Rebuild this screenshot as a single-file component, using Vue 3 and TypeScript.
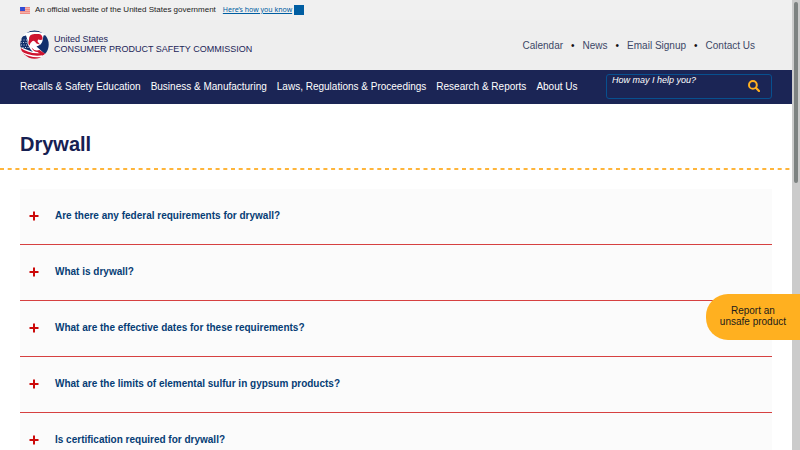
<script setup lang="ts">
import { ref } from 'vue'

interface Question {
  id: number
  text: string
}

const utilityLinks: string[] = ['Calendar', 'News', 'Email Signup', 'Contact Us']

const mainLinks: string[] = [
  'Recalls & Safety Education',
  'Business & Manufacturing',
  'Laws, Regulations & Proceedings',
  'Research & Reports',
  'About Us',
]

const questions: Question[] = [
  { id: 1, text: 'Are there any federal requirements for drywall?' },
  { id: 2, text: 'What is drywall?' },
  { id: 3, text: 'What are the effective dates for these requirements?' },
  { id: 4, text: 'What are the limits of elemental sulfur in gypsum products?' },
  { id: 5, text: 'Is certification required for drywall?' },
]

const query = ref('')
</script>

<template>
  <div class="shell">
    <div class="page">
      <div class="banner">
        <svg class="flag" viewBox="0 0 20 14" aria-hidden="true">
          <rect width="20" height="14" fill="#f6b0a8" />
          <path d="M0 1h20M0 5h20M0 9h20M0 13h20" stroke="#f08c84" stroke-width="2" />
          <rect width="10" height="8" fill="#2b45d0" />
          <path d="M1 2h8M1 4h8M1 6h8" stroke="#8fa0ec" stroke-width=".7" stroke-dasharray="1 1.3" />
        </svg>
        <span>An official website of the United States government</span>
        <button type="button" class="know"><span class="know-text">Here’s how you know</span><span class="know-box"></span></button>
      </div>

      <header class="header">
        <a href="#" class="brand">
          <svg class="seal" viewBox="0 0 58 58" aria-hidden="true">
            <defs>
              <clipPath id="seal-disc"><circle cx="29" cy="29" r="28.5" /></clipPath>
            </defs>
            <g clip-path="url(#seal-disc)">
              <rect width="58" height="58" fill="#fff" />
              <path d="M12 6Q29-5 46 6Q29 1 12 6Z" fill="#12306c" />
              <path d="M47 11L60 8V46L52 50L33 33Q43 30 45 22Z" fill="#12306c" />
              <path d="M0 14L12 11Q16 20 15 27Q20 39 26 44L0 34Z" fill="#12306c" />
              <path d="M2 20h14M1 25h15M2 30h16M5 35h16" stroke="#fff" stroke-width="1.6" stroke-dasharray="2 3" />
              <path d="M18 20Q17 8 29 8H38Q46 9 45 19L41 20L36 19L35 23L40 29L33 27Q29 20 25 22Q20 25 19 31Q15 27 18 20Z" fill="#ce1430" />
              <path d="M0 35Q19 49 43 46L48 50Q21 55 0 41ZM3 45Q21 57 43 54L38 59Q18 61 3 49Z" fill="#ce1430" />
              <path d="M23 35Q29 43 39 40L51 48L45 51L35 44Q27 44 23 35Z" fill="#ce1430" />
            </g>
          </svg>
          <span class="brand-text">United States<br />CONSUMER PRODUCT SAFETY COMMISSION</span>
        </a>
        <ul class="utility">
          <li v-for="link in utilityLinks" :key="link"><a href="#">{{ link }}</a></li>
        </ul>
      </header>

      <nav class="nav">
        <ul class="menu">
          <li v-for="link in mainLinks" :key="link"><a href="#">{{ link }}</a></li>
        </ul>
        <form class="search" role="search" @submit.prevent>
          <input v-model="query" type="text" aria-label="Search" placeholder="How may I help you?" />
          <button type="submit" aria-label="Submit search">
            <svg viewBox="0 0 12 12" aria-hidden="true">
              <circle cx="4.9" cy="4.9" r="3.9" fill="none" stroke="#ffb020" stroke-width="2" />
              <path d="M7.8 7.8L11 11" stroke="#ffb020" stroke-width="2.2" stroke-linecap="round" />
            </svg>
          </button>
        </form>
      </nav>

      <main>
        <h1>Drywall</h1>
        <svg class="divider" aria-hidden="true">
          <line x1="0" y1="1" x2="100%" y2="1" stroke="#ffb53a" stroke-width="2" stroke-dasharray="4 3.7" />
        </svg>
        <div class="questions">
          <button v-for="q in questions" :key="q.id" type="button" class="question" aria-expanded="false">
            <svg class="plus" viewBox="0 0 10 10" aria-hidden="true">
              <path d="M5 .5V9.5M.5 5H9.5" stroke="#cc0a0a" stroke-width="2" />
            </svg>
            <span>{{ q.text }}</span>
          </button>
        </div>
      </main>
    </div>

    <div class="scroll-track" aria-hidden="true"><div class="scroll-thumb"></div></div>
    <a href="#" class="report">Report an<br />unsafe product</a>
  </div>
</template>

<style>
body {
  margin: 0;
  background: #fff;
}
</style>

<style scoped>
.shell {
  display: flex;
  height: 100vh;
  overflow: hidden;
  font: 10px/12px "Liberation Sans", Arial, sans-serif;
  color: #1b1b1b;
}
.page {
  flex: 1;
  min-width: 0;
  overflow: hidden;
}
a {
  color: inherit;
  text-decoration: none;
}
button {
  padding: 0;
  border: 0;
  background: none;
  font: inherit;
  color: inherit;
  cursor: pointer;
}
ul {
  display: flex;
  margin: 0;
  padding: 0;
  list-style: none;
}
.banner {
  display: flex;
  align-items: center;
  height: 20px;
  padding: 0 20px;
  background: #f0f0f0;
  font-size: 8px;
}
.flag {
  width: 10px;
  height: 7px;
  margin-right: 5px;
}
.know {
  display: flex;
  align-items: center;
  margin-left: 7px;
  font-family: "Noto Sans", sans-serif;
  font-size: 7px;
  color: #005ea2;
}
.know-text {
  text-decoration: underline;
}
.know-box {
  width: 10px;
  height: 10px;
  margin-left: 2px;
  background: #005ea2;
}
.header {
  display: flex;
  align-items: center;
  justify-content: space-between;
  height: 50px;
  padding: 0 37px 2px 20px;
  box-sizing: border-box;
  background: #eee;
}
.brand {
  display: flex;
  align-items: center;
  gap: 5px;
  font-size: 9px;
  line-height: 10px;
  color: #1c2558;
}
.seal {
  width: 29px;
  height: 29px;
}
.utility {
  padding-top: 4px;
  color: #3c4766;
}
.utility li + li::before {
  content: "•";
  margin: 0 8px;
  color: #111;
}
.nav {
  display: flex;
  align-items: center;
  justify-content: space-between;
  height: 34px;
  padding: 0 20px;
  background: #1b2555;
  color: #fff;
}
.menu {
  gap: 10px;
  white-space: nowrap;
}
.search {
  display: flex;
  justify-content: space-between;
  box-sizing: border-box;
  width: 166px;
  height: 25px;
  margin-bottom: 2px;
  border: 1px solid #07508f;
  border-radius: 3px;
}
.search input {
  flex: 1;
  min-width: 0;
  height: 10px;
  padding: 0 5px;
  border: 0;
  outline: 0;
  background: none;
  font: italic 9px/10px "Liberation Sans", Arial, sans-serif;
  color: #fff;
}
.search input::placeholder {
  color: #fff;
  opacity: 1;
}
.search button {
  display: flex;
  align-items: center;
  padding-right: 11px;
}
.search svg {
  width: 12px;
  height: 12px;
}
h1 {
  margin: 0;
  padding: 28px 20px 12px;
  font-size: 20px;
  line-height: 24px;
  color: #162052;
}
.divider {
  display: block;
  width: 100%;
  height: 2px;
}
.questions {
  margin: 19px 20px 0;
}
.question {
  display: flex;
  align-items: center;
  gap: 16px;
  box-sizing: border-box;
  width: 100%;
  height: 56px;
  padding: 0 9px 2px;
  border-bottom: 1px solid #d64040;
  background: #fbfbfb;
  font-weight: bold;
  text-align: left;
  color: #063d75;
}
.plus {
  width: 10px;
  height: 10px;
}
.scroll-track {
  width: 8px;
  background: #cbcbcb;
}
.scroll-thumb {
  width: 4px;
  height: 181px;
  margin: 2px auto;
  border-radius: 2px;
  background: #7d8281;
}
.report {
  position: absolute;
  top: 294px;
  right: 0;
  padding: 11px 14px 13px;
  border-radius: 22px 0 0 22px;
  background: #ffb020;
  font-size: 10px;
  line-height: 11px;
  text-align: center;
  color: #1b1b1b;
}
</style>
